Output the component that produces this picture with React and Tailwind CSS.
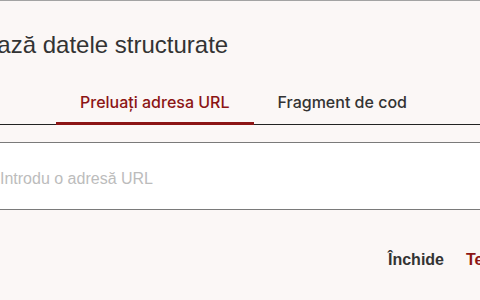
import React from 'react';

const App = () => {
  return (
    <div className="w-[480px] h-[300px] overflow-hidden bg-[#fbf7f6] border-t border-[#a3a3a3] font-['Liberation_Sans',Arial,sans-serif]">
      {/* titlu */}
      <div className="mt-[28px] h-[32px] whitespace-nowrap">
        <h2 className="-ml-[60px] text-[24px] leading-[32px] text-[#333333] font-normal">Testează datele structurate</h2>
      </div>

      {/* taburi */}
      <div className="mt-[21px] flex border-b border-[#222222] pl-[56px] font-['Inter',sans-serif] text-[16px] leading-[20px] font-medium whitespace-nowrap">
        <button className="-mb-px px-6 pt-[10px] pb-[10px] border-b-[3px] border-[#8c1515] text-[#8c1515]">Preluați adresa URL</button>
        <button className="-mb-px px-6 pt-[10px] pb-[10px] border-b-[3px] border-transparent text-[#333333]">Fragment de cod</button>
      </div>

      {/* camp URL */}
      <div className="mt-[17px] -ml-[16px] w-[520px] bg-white border-y border-[#7a7a7a]">
        <input
          type="text"
          placeholder="Introdu o adresă URL"
          className="w-full h-[66px] pt-[5px] pl-[16px] bg-transparent outline-none text-[16px] text-[#333333] placeholder:text-[#bcbcbc]"
        />
      </div>

      {/* butoane */}
      <div className="mt-[40px] flex gap-[22px] pl-[388px] text-[16px] leading-[20px] font-bold whitespace-nowrap">
        <button className="text-[#333333]">Închide</button>
        <button className="text-[#8c1515]">Testează</button>
      </div>
    </div>
  );
};

export default App;
